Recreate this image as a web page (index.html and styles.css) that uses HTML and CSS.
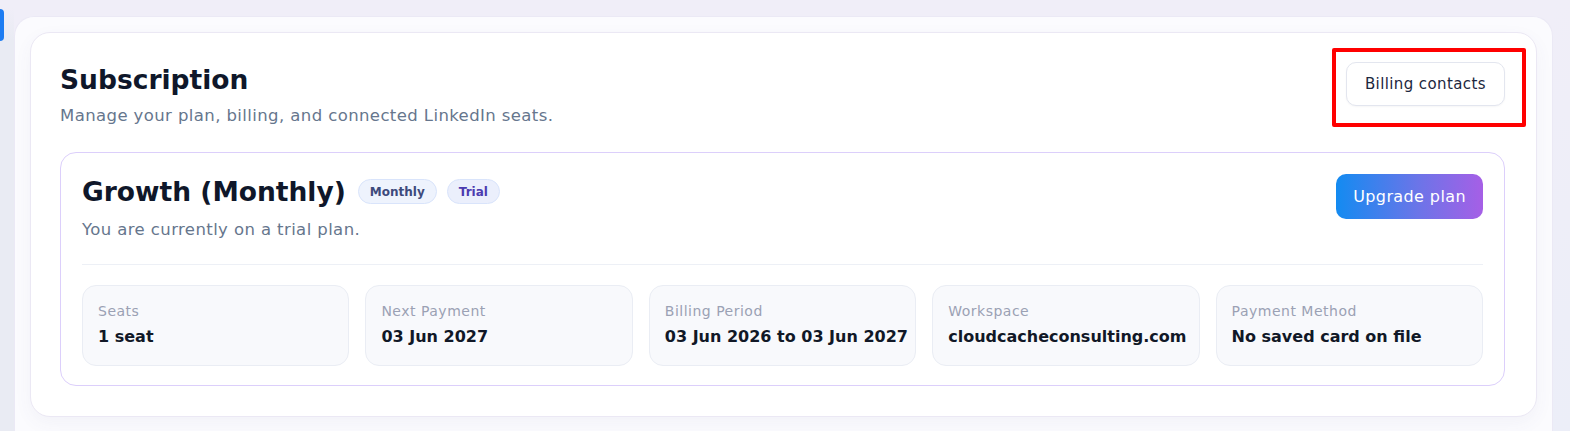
FILE: index.html
```html
<!DOCTYPE html>
<html lang="en">
<head>
<meta charset="utf-8">
<title>Subscription</title>
<link rel="stylesheet" href="styles.css">
</head>
<body>
<div class="app">
  <aside class="rail"><span class="rail-tab"></span></aside>
  <main class="panel">
    <section class="card">
      <header class="card-head">
        <div class="head-text">
          <h1 class="title">Subscription</h1>
          <p class="subtitle">Manage your plan, billing, and connected LinkedIn seats.</p>
        </div>
        <div class="head-actions">
          <button class="btn-outline" type="button">Billing contacts</button>
          <span class="focus-ring"></span>
        </div>
      </header>

      <div class="plan">
        <div class="plan-head">
          <div class="plan-info">
            <div class="plan-title-row">
              <h2 class="plan-title">Growth (Monthly)</h2>
              <span class="badge">Monthly</span>
              <span class="badge badge-trial">Trial</span>
            </div>
            <p class="plan-note">You are currently on a trial plan.</p>
          </div>
          <button class="btn-gradient" type="button">Upgrade plan</button>
        </div>

        <div class="divider"></div>

        <div class="stats">
          <div class="stat">
            <div class="stat-label">Seats</div>
            <div class="stat-value">1 seat</div>
          </div>
          <div class="stat">
            <div class="stat-label">Next Payment</div>
            <div class="stat-value">03 Jun 2027</div>
          </div>
          <div class="stat">
            <div class="stat-label">Billing Period</div>
            <div class="stat-value">03 Jun 2026 to 03 Jun 2027</div>
          </div>
          <div class="stat">
            <div class="stat-label">Workspace</div>
            <div class="stat-value">cloudcacheconsulting.com</div>
          </div>
          <div class="stat">
            <div class="stat-label">Payment Method</div>
            <div class="stat-value">No saved card on file</div>
          </div>
        </div>
      </div>
    </section>
  </main>
  <div class="gutter"></div>
</div>
</body>
</html>
```

FILE: styles.css
```css
* { box-sizing: border-box; }

html, body {
  margin: 0;
  height: 100%;
}

body {
  background: #f0eef8;
  font-family: "DejaVu Sans", "Noto Sans", sans-serif;
  color: #111827;
  overflow: hidden;
}

.app {
  display: flex;
  height: 100%;
}

/* left navigation rail, only its edge is visible */
.rail {
  width: 14px;
  flex: none;
  background: linear-gradient(#f0eef8 0, #f0eef8 8px, #e9ebf3 40px);
  padding-top: 9px;
}

.rail-tab {
  display: block;
  width: 4px;
  height: 32px;
  background: #1d7cf2;
  border-radius: 0 4px 4px 0;
}

.gutter {
  width: 17px;
  flex: none;
  background: linear-gradient(#f0eef8, #eceef8);
}

/* main content panel */
.panel {
  flex: 1;
  margin-top: 16px;
  padding: 15px 15px 0;
  background: #fbfbfe;
  border: 1px solid #ebe9f5;
  border-bottom: none;
  border-radius: 20px 20px 0 0;
}

.card {
  background: #ffffff;
  border: 1px solid #ebe8f4;
  border-radius: 20px;
  padding: 29px 31px 30px 29px;
  box-shadow: 0 6px 18px rgba(80, 70, 140, 0.05);
}

.card-head {
  display: flex;
  justify-content: space-between;
  align-items: flex-start;
}

.title {
  margin: 0;
  font-size: 26.5px;
  line-height: 36px;
  font-weight: 700;
  color: #0f172a;
}

.subtitle {
  margin: 6px 0 0;
  font-size: 16.5px;
  line-height: 24px;
  letter-spacing: 0.4px;
  color: #66768d;
}

.head-actions {
  position: relative;
}

.btn-outline {
  height: 44px;
  padding: 0 18px;
  border: 1px solid #e3e6ef;
  border-radius: 10px;
  background: #ffffff;
  font-family: inherit;
  font-size: 15px;
  letter-spacing: 0.4px;
  color: #1c2740;
  box-shadow: 0 1px 2px rgba(15, 23, 42, 0.04);
}

/* highlight frame drawn around the contacts button */
.focus-ring {
  position: absolute;
  top: -14px;
  left: -14px;
  right: -21px;
  bottom: -21px;
  border: 4px solid #ff0000;
  border-radius: 2px;
  pointer-events: none;
}

/* current plan */
.plan {
  margin-top: 24px;
  border: 1.5px solid #dccffb;
  border-radius: 16px;
  padding: 20.5px 21px 19.5px 21px;
}

.plan-head {
  display: flex;
  justify-content: space-between;
  align-items: flex-start;
}

.plan-title-row {
  display: flex;
  align-items: center;
  gap: 10px;
}

.plan-title {
  margin: 0 2px 0 0;
  font-size: 26.5px;
  line-height: 36px;
  font-weight: 700;
  color: #0f172a;
}

.badge {
  display: inline-flex;
  align-items: center;
  height: 25px;
  padding: 0 11px;
  border-radius: 999px;
  background: #eef3fd;
  border: 1px solid #d9e4fb;
  font-size: 12px;
  font-weight: 700;
  color: #3d4a7c;
}

.badge-trial {
  color: #4b3bb0;
  background: #ebeffc;
}

.plan-note {
  margin: 8px 0 0;
  font-size: 16.5px;
  line-height: 24px;
  letter-spacing: 0.4px;
  color: #66768d;
}

.btn-gradient {
  height: 45px;
  padding: 0 17px;
  border: none;
  border-radius: 10px;
  background: linear-gradient(90deg, #138bf1 0%, #6a75e8 55%, #a65fe6 100%);
  color: #ffffff;
  font-family: inherit;
  font-size: 16px;
  letter-spacing: 0.4px;
}

.divider {
  height: 1px;
  background: #edf0f6;
  margin: 22px 0 20px;
}

.stats {
  display: grid;
  grid-template-columns: repeat(5, minmax(0, 1fr));
  gap: 16px;
}

.stat {
  background: #f8f9fc;
  border: 1px solid #eaedf4;
  border-radius: 14px;
  padding: 15px 15px 16px;
}

.stat-label {
  font-size: 14px;
  line-height: 20px;
  letter-spacing: 0.5px;
  color: #9ba1b4;
}

.stat-value {
  margin-top: 4px;
  font-size: 16px;
  line-height: 24px;
  font-weight: 700;
  color: #111827;
  white-space: nowrap;
}
```
